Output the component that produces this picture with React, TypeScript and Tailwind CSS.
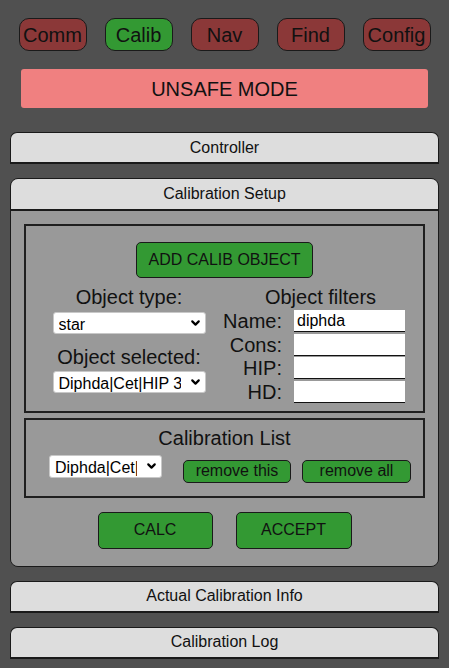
import React from "react";
import { ChevronDown } from "lucide-react";

const font = { fontFamily: '"Liberation Sans", Arial, sans-serif' };

function NavButton({ label, active }: { label: string; active?: boolean }) {
  return (
    <button
      className={`w-[68px] h-[33px] rounded-[10px] border border-[#1a1a1a] text-[20px] leading-none text-[#111] flex items-center justify-center ${
        active ? "bg-[#339933]" : "bg-[#8b3838]"
      }`}
    >
      {label}
    </button>
  );
}

function SectionHeader({ title }: { title: string }) {
  return (
    <div className="h-[32px] mx-[10px] bg-[#dddddd] border border-[#1a1a1a] border-b-2 rounded-t-[7px] flex items-center justify-center text-[16px] text-[#111]">
      {title}
    </div>
  );
}

function Select({ value, className }: { value: string; className: string }) {
  return (
    <div className={`relative shrink-0 ${className}`}>
      <select className="appearance-none w-full h-full bg-white border border-[#c8c8c8] rounded-[3px] pl-[5px] pr-[24px] text-[16px] text-black outline-none">
        <option>{value}</option>
      </select>
      <ChevronDown
        size={13}
        strokeWidth={4}
        className="absolute right-[4px] top-1/2 -translate-y-1/2 text-black pointer-events-none"
      />
    </div>
  );
}

function FilterRow({ label, value }: { label: string; value?: string }) {
  return (
    <div className="flex items-center justify-end gap-[12px] pr-[18px] h-[22px]">
      <span className="text-[20px] leading-none text-[#111] whitespace-nowrap">
        {label}
      </span>
      <input
        defaultValue={value}
        className="w-[111px] shrink-0 h-[22px] bg-white border-b border-b-[#111] px-[3px] text-[16px] text-black outline-none"
      />
    </div>
  );
}

function GreenButton({
  children,
  className,
}: {
  children: React.ReactNode;
  className: string;
}) {
  return (
    <button
      className={`bg-[#339933] border border-[#1a1a1a] text-[#111] flex items-center justify-center leading-none shrink-0 ${className}`}
    >
      {children}
    </button>
  );
}

export default function App() {
  return (
    <div className="min-h-screen bg-[#505050] pt-[18px] pb-[10px]" style={font}>
      {/* top nav */}
      <div className="flex justify-center gap-[18px]">
        <NavButton label="Comm" />
        <NavButton label="Calib" active />
        <NavButton label="Nav" />
        <NavButton label="Find" />
        <NavButton label="Config" />
      </div>

      <div className="mx-[21px] mt-[18px] h-[39px] rounded-[3px] bg-[#f08080] flex items-center justify-center text-[20px] text-[#111]">
        UNSAFE MODE
      </div>

      <div className="mt-[24px]">
        <SectionHeader title="Controller" />
      </div>

      {/* calibration setup panel */}
      <div className="mt-[14px] mx-[10px] border border-[#1a1a1a] rounded-[8px] overflow-hidden">
        <div className="h-[32px] bg-[#dddddd] border-b-2 border-[#1a1a1a] flex items-center justify-center text-[16px] text-[#111]">
          Calibration Setup
        </div>
        <div className="bg-[#999999] px-[13px] pt-[13px] pb-[17px]">
          {/* add object box */}
          <div className="border-2 border-[#1f1f1f] pt-[16px] pb-[8px]">
            <div className="flex justify-center">
              <GreenButton className="w-[177px] h-[36px] rounded-[5px] text-[16px]">
                ADD CALIB OBJECT
              </GreenButton>
            </div>
            <div className="flex items-start mt-[8px]">
              <div className="w-[206px] shrink-0 flex flex-col items-center">
                <div className="text-[20px] leading-[22px] text-[#111]">
                  Object type:
                </div>
                <Select value="star" className="mt-[4px] w-[153px] h-[22px]" />
                <div className="mt-[12px] text-[20px] leading-[22px] text-[#111]">
                  Object selected:
                </div>
                <Select
                  value="Diphda|Cet|HIP 3419"
                  className="mt-[3px] w-[153px] h-[22px]"
                />
              </div>
              <div className="flex-1 min-w-0 flex flex-col">
                <div className="pr-[14px] text-center text-[20px] leading-[22px] text-[#111] whitespace-nowrap">
                  Object filters
                </div>
                <div className="mt-[2px] flex flex-col gap-[1.5px]">
                  <FilterRow label="Name:" value="diphda" />
                  <FilterRow label="Cons:" />
                  <FilterRow label="HIP:" />
                  <FilterRow label="HD:" />
                </div>
              </div>
            </div>
          </div>

          {/* calibration list box */}
          <div className="mt-[5px] border-2 border-[#1f1f1f] pt-[7px] pb-[13px]">
            <div className="text-center text-[20px] leading-[22px] text-[#111]">
              Calibration List
            </div>
            <div className="flex items-start">
              <Select
                value="Diphda|Cet|HIP 3419"
                className="ml-[23px] mt-[6px] w-[113px] h-[23px]"
              />
              <div className="ml-[21px] mt-[11px] flex gap-[11px]">
                <GreenButton className="w-[108px] h-[23px] rounded-[5px] text-[16px]">
                  remove this
                </GreenButton>
                <GreenButton className="w-[109px] h-[23px] rounded-[5px] text-[16px]">
                  remove all
                </GreenButton>
              </div>
            </div>
          </div>

          <div className="mt-[14px] flex justify-center gap-[23px]">
            <GreenButton className="w-[115px] h-[37px] rounded-[5px] text-[16px]">
              CALC
            </GreenButton>
            <GreenButton className="w-[116px] h-[37px] rounded-[5px] text-[16px]">
              ACCEPT
            </GreenButton>
          </div>
        </div>
      </div>

      <div className="mt-[14px]">
        <SectionHeader title="Actual Calibration Info" />
      </div>
      <div className="mt-[14px]">
        <SectionHeader title="Calibration Log" />
      </div>
    </div>
  );
}
